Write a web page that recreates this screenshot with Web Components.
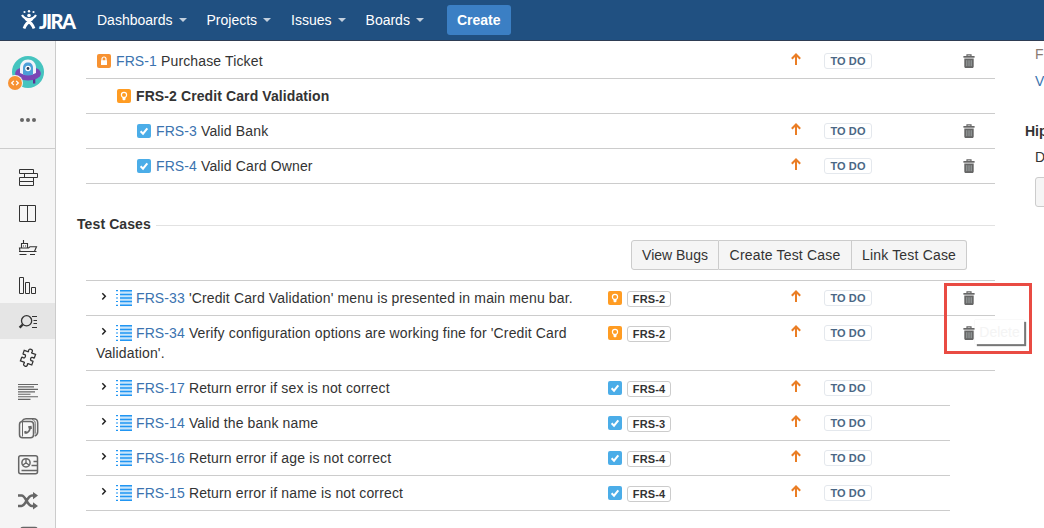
<!DOCTYPE html>
<html lang="en">
<head>
<meta charset="utf-8">
<title>FRS - JIRA</title>
<style>
  html, body {
    margin: 0;
    height: 100%;
    overflow: hidden;
    background: #fff;
  }
  body {
    font-family: "Liberation Sans", Arial, sans-serif;
    font-size: 14px;
    line-height: 20px;
    color: #333;
  }
</style>
</head>
<body>
<jira-page>
  <jira-header slot="header">
    <nav-item>Dashboards</nav-item>
    <nav-item>Projects</nav-item>
    <nav-item>Issues</nav-item>
    <nav-item>Boards</nav-item>
  </jira-header>

  <jira-sidebar slot="sidebar"></jira-sidebar>

  <issue-list>
    <issue-row type="lock" key="FRS-1" level="0" status="TO DO" deletable>Purchase Ticket</issue-row>
    <issue-row type="bulb" key="FRS-2" level="1" current>Credit Card Validation</issue-row>
    <issue-row type="check" key="FRS-3" level="2" status="TO DO" deletable>Valid Bank</issue-row>
    <issue-row type="check" key="FRS-4" level="2" status="TO DO" deletable>Valid Card Owner</issue-row>
  </issue-list>

  <panel-section label="Test Cases">
    <button-group slot="actions">
      <button>View Bugs</button>
      <button>Create Test Case</button>
      <button>Link Test Case</button>
    </button-group>
    <issue-list bordered>
      <issue-row type="list" key="FRS-33" parent="FRS-2" parent-type="bulb" status="TO DO" deletable>'Credit Card Validation' menu is presented in main menu bar.</issue-row>
      <issue-row type="list" key="FRS-34" parent="FRS-2" parent-type="bulb" status="TO DO" deletable>Verify configuration options are working fine for 'Credit Card Validation'.</issue-row>
      <issue-row type="list" key="FRS-17" parent="FRS-4" parent-type="check" status="TO DO">Return error if sex is not correct</issue-row>
      <issue-row type="list" key="FRS-14" parent="FRS-3" parent-type="check" status="TO DO">Valid the bank name</issue-row>
      <issue-row type="list" key="FRS-16" parent="FRS-4" parent-type="check" status="TO DO">Return error if age is not correct</issue-row>
      <issue-row type="list" key="FRS-15" parent="FRS-4" parent-type="check" status="TO DO">Return error if name is not correct</issue-row>
    </issue-list>
  </panel-section>

  <side-details slot="details"></side-details>
  <delete-callout slot="overlay">Delete</delete-callout>
</jira-page>

<script>
const ICONS = {
  lock: [14, 14, `<rect width="14" height="14" rx="2" fill="#f79232"/><path d="M5 7V5a2 2 0 0 1 4 0v2" fill="none" stroke="#fff" stroke-width="1.2"/><rect x="4" y="6.2" width="6" height="4.8" rx=".6" fill="#fff"/>`],
  bulb: [14, 14, `<rect width="14" height="14" rx="2" fill="#ff9c23"/><path d="M5.7 8.4C4.9 7.7 4.4 7 4.4 5.9a2.6 2.6 0 0 1 5.2 0c0 1.1-.5 1.8-1.3 2.5z" fill="none" stroke="#fff" stroke-width="1.2"/><path d="M5.5 9h3v1.5L7.7 11.3H6.3L5.5 10.5z" fill="#fff"/>`],
  check: [14, 14, `<rect width="14" height="14" rx="2" fill="#4bade8"/><path d="M3.6 7.3 6 9.7 10.3 4.3" fill="none" stroke="#fff" stroke-width="2"/>`],
  list: [16, 16, `<rect x="4" y="0" width="12" height="16" fill="#c9e5fb"/><path d="M4 .7h12M4 4.5h12M4 8h12M4 11.5h12M4 15.3h12" stroke="#2196f3" stroke-width="1.4"/><path d="M0 .7h2M0 4.5h2M0 8h2M0 11.5h2M0 15.3h2" stroke="#2196f3" stroke-width="1.2"/>`],
  chevron: [20, 16, `<path d="M6.3 3.2 9.3 6.3 6.3 9.4" fill="none" stroke="#222" stroke-width="1.5"/>`],
  priority: [10, 12, `<path d="M5 12V1.5M.8 5.8 5 1.5l4.2 4.3" fill="none" stroke="#ea7d24" stroke-width="2"/>`],
  trash: [12, 14, `<path d="M4 2.3V.8h4v1.5" fill="none" stroke="#666" stroke-width="1.2"/><path d="M.4 2h11.2v1.7H.4z" fill="#666"/><path d="M1.3 4.6h9.4V12.5c0 .9-.5 1.5-1.4 1.5H2.7c-.9 0-1.4-.6-1.4-1.5z" fill="#666"/><path d="M3.8 6.2v6M6 6.2v6M8.2 6.2v6" stroke="#a5adad" stroke-width=".9"/>`],

  // sidebar glyphs, all drawn in a 36px cell
  backlog: [36, 36, `<path d="M9.5 10.5h14v4h-14zM14.5 14.5h13v4h-13zM9.5 18.5h14v4h-14zM9.5 22.5h14v4h-14z"/>`],
  board: [36, 36, `<path d="M9.5 10.5h16v16h-16zM17.5 10.5v16"/>`],
  ship: [36, 36, `<path d="M13.5 9v3.5M11.5 17v-4.5h6V17M10 20.5l-.5-3.5h9l1.5-1.2h6.5l-2 4.5M9 20.5h17.5" stroke-width="1.1"/><path d="M13.5 14.5v1M15.5 14.5v1M9.5 23.5h7M20 23.5h5"/>`],
  reports: [36, 36, `<path d="M9.5 10.5h4v16h-4zM15.5 15.5h4v11h-4zM21.5 20.5h4v6h-4z"/>`],
  search: [36, 36, `<circle cx="16.6" cy="17.8" r="5.1" stroke-width="1.3"/><path d="M12.8 21.5 9.6 24.6" stroke-width="2.4"/><path d="M22 13.5h5M23.5 17.5H27M23.5 20.5H27M22 24.5h5" stroke-width="1.1"/>`],
  puzzle: [36, 36, `<path transform="translate(18 18.7) rotate(20) scale(.86) translate(-18 -18.5)" d="M11 12h4.500c.9 0 .5-.8.3-1.500-.3-1.500.7-2.400 2.200-2.400s2.500.9 2.200 2.400c-.2.700-.6 1.500.3 1.500H25v4c0 .8-.7.600-1.500.400-1.300-.3-2.200.6-2.200 2s.9 2.300 2.200 2c.8-.2 1.500-.4 1.500.4V25h-4.500c-.9 0-.5.8-.3 1.500.3 1.500-.7 2.400-2.200 2.400s-2.500-.9-2.200-2.400c.2-.7.6-1.500-.3-1.500H11v-4.200c0-.8.7-.6 1.500-.4 1.300.3 2.200-.6 2.200-2s-.9-2.300-2.200-2c-.8.2-1.500.4-1.500-.4z" stroke-width="1.500"/>`],
  lines: [36, 36, `<path d="M8 9.5h20M8 11.9h16M8 14.4h20M8 16.9h17M8 19.3h12.5M8 21.8h20M8 24.4h12.5" stroke="#666" stroke-width="1.1"/>`],
  phone: [36, 36, `<g stroke="#666" stroke-width="1.5"><rect x="9.5" y="10.5" width="14" height="16.2" rx="3"/><path d="M12 10c1-1.8 2-2.2 4-2.2h7.5c3 0 4.2 1.3 4.2 4v9c0 2.5-1 3.5-3 4.2"/><path d="M12.5 10.5v15M22 8.5c2.2.5 3.2 1.7 3.2 3.7v10.5" stroke-width="1"/></g><path d="M15.5 22.2c2.7-.6 4.7-3 4.4-5.7" stroke="#666" stroke-width="1.7"/><path d="M18 15.3l3.5-.6.5 3-3 .9zM14 20.5l2.2-.8.9 2-2.3 1.4z" fill="#666" stroke="none"/>`],
  report: [36, 36, `<g stroke="#666"><rect x="8.7" y="8.7" width="18.8" height="18" rx="2" stroke-width="1.5"/><circle cx="16" cy="15.8" r="4.1" stroke-width="1.5"/><path d="M16 15.8V12M16 15.8l-3 2.3M16 15.8l3 2.3" stroke-width="1.3"/><path d="M23.5 14.5H27M21.5 18.5H27M11.5 23.5H27" stroke-width="1.3"/></g>`],
  shuffle: [36, 36, `<path d="M8 12.5h3.5c4.5 0 5.5 10.5 10.5 10.5H24M8 23h3.5c4.5 0 5.5-10.5 10.5-10.5H24" stroke="#666" stroke-width="2.6"/><path d="M23 9l5 3.5-5 3.7zM23 19.3l5 3.7-5 3.6z" fill="#666" stroke="none"/>`],
  page: [36, 36, `<rect x="11" y="8.5" width="16" height="18" rx="2" stroke="#666" stroke-width="1.6"/>`]
};

function icon(name) {
  const [w, h, body] = ICONS[name];
  return `<svg class="icon ${name}" width="${w}" height="${h}" viewBox="0 0 ${w} ${h}">${body}</svg>`;
}

class JiraPage extends HTMLElement {
  constructor() {
    super();
    this.attachShadow({ mode: 'open' });
    this.shadowRoot.innerHTML = `
      <style>
        :host {
          display: flex;
          flex-direction: column;
          position: relative;
          width: 1044px;
          height: 528px;
          overflow: hidden;
        }
        .body {
          display: flex;
          flex: 1;
          min-height: 0;
        }
        main {
          flex: none;
          width: 918px;
          padding: 3px 0 0 21px;
        }
      </style>
      <slot name="header"></slot>
      <div class="body">
        <slot name="sidebar"></slot>
        <main><slot></slot></main>
        <slot name="details"></slot>
      </div>
      <slot name="overlay"></slot>
    `;
  }
}

class JiraHeader extends HTMLElement {
  constructor() {
    super();
    this.attachShadow({ mode: 'open' });
    this.shadowRoot.innerHTML = `
      <style>
        :host {
          display: flex;
          align-items: center;
          flex: none;
          box-sizing: border-box;
          height: 41px;
          padding-left: 21px;
          background: #205081;
          border-bottom: 1px solid #2e3d54;
          color: #fff;
        }
        .logo {
          display: flex;
          align-items: center;
          width: 76px;
        }
        .logo span {
          font: 900 20px/20px Lato, sans-serif;
          letter-spacing: -1.6px;
          margin: 1px 0 0 2px;
        }
        nav {
          display: flex;
          gap: 20px;
        }
        button {
          height: 30px;
          margin-left: 23px;
          padding: 0 10px;
          border: 0;
          border-radius: 3px;
          background: #3b7fc4;
          color: #fff;
          font: bold 14px "Liberation Sans", Arial, sans-serif;
        }
      </style>
      <div class="logo">
        <svg width="16" height="20" viewBox="0 0 16 20" fill="none" stroke="#fff">
          <path d="M1 5c1.5 2.5 3.5 4 7 4s5.5-1.5 7-4" stroke-width="2.2"/>
          <path d="M3 18.5C4.5 14 6.5 12.5 11.5 8.5M13 18.5C11.5 14 9.5 12.5 4.5 8.5" stroke-width="2.8"/>
          <circle cx="8" cy="5.5" r="1.8" fill="#fff" stroke="none"/>
          <g fill="#fff" stroke="none"><circle cx="3.5" cy="2" r="1.1"/><circle cx="8" cy="1.2" r="1.2"/><circle cx="12.5" cy="2" r="1.1"/></g>
        </svg>
        <span>JIRA</span>
      </div>
      <nav><slot></slot></nav>
      <button>Create</button>
    `;
  }
}

class NavItem extends HTMLElement {
  constructor() {
    super();
    this.attachShadow({ mode: 'open' });
    this.shadowRoot.innerHTML = `
      <style>
        :host {
          display: flex;
          align-items: center;
        }
        :host::after {
          content: "";
          margin-left: 6px;
          border: 4px solid transparent;
          border-top-color: #c3d0de;
          border-bottom: 0;
        }
      </style>
      <slot></slot>
    `;
  }
}

class JiraSidebar extends HTMLElement {
  constructor() {
    super();
    const items = ['backlog', 'board', 'ship', 'reports', 'search', 'puzzle', 'lines', 'phone', 'report', 'shuffle', 'page'];
    this.attachShadow({ mode: 'open' });
    this.shadowRoot.innerHTML = `
      <style>
        :host {
          display: flex;
          flex-direction: column;
          flex: none;
          width: 55px;
          background: #f5f5f5;
          border-right: 1px solid #ccc;
          overflow: hidden;
        }
        .project {
          flex: none;
          height: 107px;
          border-bottom: 1px solid #ccc;
          margin-bottom: 10px;
        }
        .project svg {
          display: block;
        }
        .item {
          flex: none;
          height: 36px;
          padding-left: 10px;
        }
        .item.active {
          background: #e5e5e5;
        }
        .item svg {
          display: block;
          fill: none;
          stroke: #333;
        }
      </style>
      <div class="project">
        <svg width="55" height="107" viewBox="0 41 55 107">
          <circle cx="28" cy="72" r="16" fill="#45c4bf"/>
          <path d="M33 79h2.3v4.5H33z" fill="#5c2f91"/>
          <ellipse cx="28" cy="73.5" rx="12.8" ry="7" fill="#7b45b5"/>
          <path d="M20 73v-5c0-5.500 3.500-8.500 8-8.500s8 3 8 8.500v5c-4.500 2.500-11.500 2.500-16 0z" fill="#f2f4fa"/>
          <path d="M23 74.500V68c0-3.500 2-5.500 5-5.500s5 2 5 5.500v6.500c-3 1.200-7 1.200-10 0z" fill="#4c9fd8"/>
          <circle cx="28" cy="68.5" r="2.8" fill="#fff"/><circle cx="28" cy="68.5" r="1.4" fill="#253858"/>
          <circle cx="15" cy="83" r="8" fill="#f5f5f5"/><circle cx="15" cy="83" r="7" fill="#f79232"/>
          <path d="M13.8 80.9 11.7 83l2.1 2.1M16.2 80.9l2.1 2.1-2.1 2.1" fill="none" stroke="#fff" stroke-width="1.3"/>
          <g fill="#666"><circle cx="22" cy="120" r="2"/><circle cx="28" cy="120" r="2"/><circle cx="34" cy="120" r="2"/></g>
        </svg>
      </div>
      ${items.map(name => `<div class="item${name === 'search' ? ' active' : ''}">${icon(name)}</div>`).join('')}
    `;
  }
}

class IssueList extends HTMLElement {
  constructor() {
    super();
    this.attachShadow({ mode: 'open' });
    this.shadowRoot.innerHTML = `
      <style>
        :host {
          display: block;
          margin-left: 9px;
        }
        :host([bordered]) {
          border-top: 1px solid #ccc;
        }
      </style>
      <slot></slot>
    `;
  }
}

class IssueRow extends HTMLElement {
  constructor() {
    super();
    this.attachShadow({ mode: 'open' });
  }

  connectedCallback() {
    const type = this.getAttribute('type');
    const parent = this.getAttribute('parent');
    const status = this.getAttribute('status');
    const level = Number(this.getAttribute('level')) || 0;

    this.shadowRoot.innerHTML = `
      <style>
        :host {
          display: grid;
          grid-template-columns: 522px 183px 33px 126px;
          align-items: start;
          width: 864px;
          padding: 7px 0;
          border-bottom: 1px solid #ccc;
          letter-spacing: 0.14px;
        }
        :host([deletable]), :host([current]) {
          width: 909px;
          grid-template-columns: 522px 183px 33px 139px 32px;
        }
        :host([current]) {
          letter-spacing: 0.1px;
        }
        .title {
          padding: 0 20px 0 ${10 + level * 20}px;
        }
        .title .icon {
          vertical-align: -2px;
          margin: 0 5px 0 1px;
        }
        .title .chevron {
          margin: 0;
          vertical-align: -3px;
        }
        .title .list {
          margin: 0 4px 0 0;
          vertical-align: -3px;
        }
        .key {
          color: #3b73af;
          letter-spacing: 0.1px;
        }
        :host([current]) .title, :host([current]) .key {
          color: #333;
          font-weight: bold;
        }
        .parent {
          display: flex;
          gap: 5px;
          padding-top: 3px;
        }
        .badge {
          box-sizing: border-box;
          height: 16px;
          border: 1px solid #ccc;
          border-radius: 3px;
          font-size: 11px;
          font-weight: bold;
          line-height: 15px;
          text-align: center;
          letter-spacing: 0.1px;
        }
        .parent .badge {
          width: 44px;
        }
        .status .badge {
          width: 48px;
          margin-top: 2px;
          border-color: #e4e8ed;
          color: #4a6785;
        }
        .priority, .trash {
          display: block;
          margin-top: 2px;
        }
        .trash {
          margin-top: 3px;
        }
      </style>
      <div class="title">${type === 'list' ? icon('chevron') : ''}${icon(type)}<span class="key">${this.getAttribute('key')}</span> <slot></slot></div>
      <div class="parent">${parent ? `${icon(this.getAttribute('parent-type'))}<span class="badge">${parent}</span>` : ''}</div>
      <div>${status ? icon('priority') : ''}</div>
      <div class="status">${status ? `<div class="badge">${status}</div>` : ''}</div>
      ${this.hasAttribute('deletable') ? `<div>${icon('trash')}</div>` : ''}
    `;
  }
}

class PanelSection extends HTMLElement {
  constructor() {
    super();
    this.attachShadow({ mode: 'open' });
    this.shadowRoot.innerHTML = `
      <style>
        :host {
          display: block;
          margin-top: 30px;
        }
        h4 {
          display: flex;
          align-items: center;
          gap: 5px;
          margin: 0;
          font-size: 14px;
          letter-spacing: 0.1px;
        }
        h4::after {
          content: "";
          flex: 1;
          height: 1px;
          margin-top: 2px;
          background: #e2e2e2;
        }
        .actions {
          display: flex;
          justify-content: flex-end;
          margin: 6px 28px 10px 0;
        }
      </style>
      <h4><span></span></h4>
      <div class="actions"><slot name="actions"></slot></div>
      <slot></slot>
    `;
  }

  connectedCallback() {
    this.shadowRoot.querySelector('h4 span').textContent = this.getAttribute('label');
  }
}

class ButtonGroup extends HTMLElement {
  constructor() {
    super();
    this.attachShadow({ mode: 'open' });
    this.shadowRoot.innerHTML = `
      <style>
        :host {
          display: grid;
          grid-template-columns: 88px 133px 115px;
        }
        ::slotted(button) {
          box-sizing: border-box;
          height: 30px;
          margin: 0;
          padding: 0;
          border: 1px solid #ccc;
          border-left-width: 0;
          background: #f5f5f5;
          color: #333;
          font: 14px "Liberation Sans", Arial, sans-serif;
          letter-spacing: 0.18px;
        }
        ::slotted(button:first-child) {
          border-left-width: 1px;
          border-radius: 3px 0 0 3px;
          letter-spacing: 0;
        }
        ::slotted(button:last-child) {
          border-radius: 0 3px 3px 0;
        }
      </style>
      <slot></slot>
    `;
  }
}

class SideDetails extends HTMLElement {
  constructor() {
    super();
    this.attachShadow({ mode: 'open' });
    this.shadowRoot.innerHTML = `
      <style>
        :host {
          display: block;
          flex: 1;
          min-width: 0;
          overflow: hidden;
          white-space: nowrap;
          padding: 3px 0 0 30px;
        }
        div {
          padding-left: 10px;
          height: 27px;
        }
        .muted {
          color: #8a7a70;
        }
        .link {
          color: #3b73af;
        }
        h4 {
          margin: 23px 0 6px;
          font-size: 14px;
        }
        .field {
          box-sizing: border-box;
          width: 40px;
          height: 30px;
          margin: 3px 0 0 10px;
          border: 1px solid #ccc;
          border-radius: 3px;
          background: #f5f5f5;
        }
      </style>
      <div class="muted">F</div>
      <div class="link">V</div>
      <h4>Hip</h4>
      <div>D</div>
      <div class="field"></div>
    `;
  }
}

class DeleteCallout extends HTMLElement {
  constructor() {
    super();
    this.attachShadow({ mode: 'open' });
    this.shadowRoot.innerHTML = `
      <style>
        :host {
          position: absolute;
          box-sizing: border-box;
          left: 944px;
          top: 283px;
          width: 88px;
          height: 71px;
          border: 3px solid #e94b43;
        }
        .tip {
          position: absolute;
          left: 28px;
          top: 34px;
          width: 49px;
          height: 24px;
          background: #fff;
          box-shadow: 0 0 1px #ddd, 2px 2px 1px #777;
          color: #f4f4f4;
          line-height: 25px;
          text-align: center;
        }
      </style>
      <div class="tip"><slot></slot></div>
    `;
  }
}

customElements.define('jira-page', JiraPage);
customElements.define('jira-header', JiraHeader);
customElements.define('nav-item', NavItem);
customElements.define('jira-sidebar', JiraSidebar);
customElements.define('issue-list', IssueList);
customElements.define('issue-row', IssueRow);
customElements.define('panel-section', PanelSection);
customElements.define('button-group', ButtonGroup);
customElements.define('side-details', SideDetails);
customElements.define('delete-callout', DeleteCallout);
</script>
</body>
</html>
